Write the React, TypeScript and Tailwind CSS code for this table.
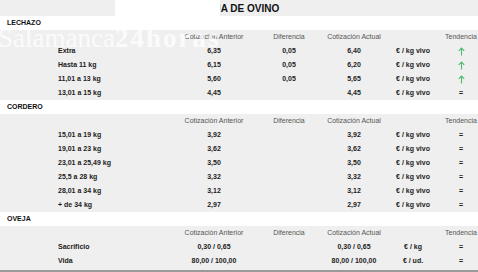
import React from 'react';

type Row = {
  label: string;
  anterior: string;
  diferencia?: string;
  actual: string;
  unidad: string;
  up?: boolean;
};

type Section = {
  name: string;
  rows: Row[];
};

const sections: Section[] = [
  {
    name: 'LECHAZO',
    rows: [
      { label: 'Extra', anterior: '6,35', diferencia: '0,05', actual: '6,40', unidad: '€ / kg vivo', up: true },
      { label: 'Hasta 11 kg', anterior: '6,15', diferencia: '0,05', actual: '6,20', unidad: '€ / kg vivo', up: true },
      { label: '11,01 a 13 kg', anterior: '5,60', diferencia: '0,05', actual: '5,65', unidad: '€ / kg vivo', up: true },
      { label: '13,01 a 15 kg', anterior: '4,45', actual: '4,45', unidad: '€ / kg vivo' },
    ],
  },
  {
    name: 'CORDERO',
    rows: [
      { label: '15,01 a 19 kg', anterior: '3,92', actual: '3,92', unidad: '€ / kg vivo' },
      { label: '19,01 a 23 kg', anterior: '3,62', actual: '3,62', unidad: '€ / kg vivo' },
      { label: '23,01 a 25,49 kg', anterior: '3,50', actual: '3,50', unidad: '€ / kg vivo' },
      { label: '25,5 a 28 kg', anterior: '3,32', actual: '3,32', unidad: '€ / kg vivo' },
      { label: '28,01 a 34 kg', anterior: '3,12', actual: '3,12', unidad: '€ / kg vivo' },
      { label: '+ de 34 kg', anterior: '2,97', actual: '2,97', unidad: '€ / kg vivo' },
    ],
  },
  {
    name: 'OVEJA',
    rows: [
      { label: 'Sacrificio', anterior: '0,30 / 0,65', actual: '0,30 / 0,65', unidad: '€ / kg' },
      { label: 'Vida', anterior: '80,00 / 100,00', actual: '80,00 / 100,00', unidad: '€ / ud.' },
    ],
  },
];

const grid = 'grid grid-cols-[180px_68px_82px_48px_70px_26px] h-[14px] items-center';
const cell = 'flex justify-center whitespace-nowrap';

const ArrowUp = () => (
  <svg width="7" height="9" viewBox="0 0 7 9" fill="none">
    <path d="M3.5 8.5V1M0.8 3.8L3.5 1L6.2 3.8" stroke="#4cbb6c" strokeWidth="1.1" />
  </svg>
);

const App: React.FC = () => {
  return (
    <div className="relative w-[478px] h-[272px] overflow-hidden bg-[#efefef] text-[#222] font-['Liberation_Sans',Arial,sans-serif]">
      {/* Title */}
      <div className="h-[16px] flex items-center pl-[194px] text-[10px] font-bold text-[#111] whitespace-nowrap">
        LONJA DE OVINO
      </div>

      {sections.map((s) => (
        <div key={s.name}>
          <div className="h-[14px] flex items-center bg-white pl-[7px] text-[7px] font-bold text-[#111]">
            {s.name}
          </div>
          <div className={`${grid} text-[7px] text-[#555]`}>
            <div />
            <div className={cell}>Cotización Anterior</div>
            <div className={cell}>Diferencia</div>
            <div className={cell}>Cotización Actual</div>
            <div />
            <div className={cell}>Tendencia</div>
          </div>
          {s.rows.map((r) => (
            <div key={r.label} className={`${grid} text-[7px] font-bold`}>
              <div className="pl-[58px] whitespace-nowrap">{r.label}</div>
              <div className={cell}>{r.anterior}</div>
              <div className={cell}>{r.diferencia ?? ''}</div>
              <div className={cell}>{r.actual}</div>
              <div className={cell}>{r.unidad}</div>
              <div className={cell}>{r.up ? <ArrowUp /> : '='}</div>
            </div>
          ))}
        </div>
      ))}

      <div className="mt-[2px] h-[2px] bg-[#9a9a9a]" />

      {/* Watermark over the table */}
      <div className="absolute left-[115px] top-0 w-[105px] h-[16px] bg-white" />
      <div className="absolute left-[-2px] top-[25px] leading-none whitespace-nowrap text-[27px] text-white/75 font-['Liberation_Serif',serif] pointer-events-none">
        Salamanca<span className="font-bold tracking-[2px]">24horas</span>
      </div>
    </div>
  );
};

export default App;
